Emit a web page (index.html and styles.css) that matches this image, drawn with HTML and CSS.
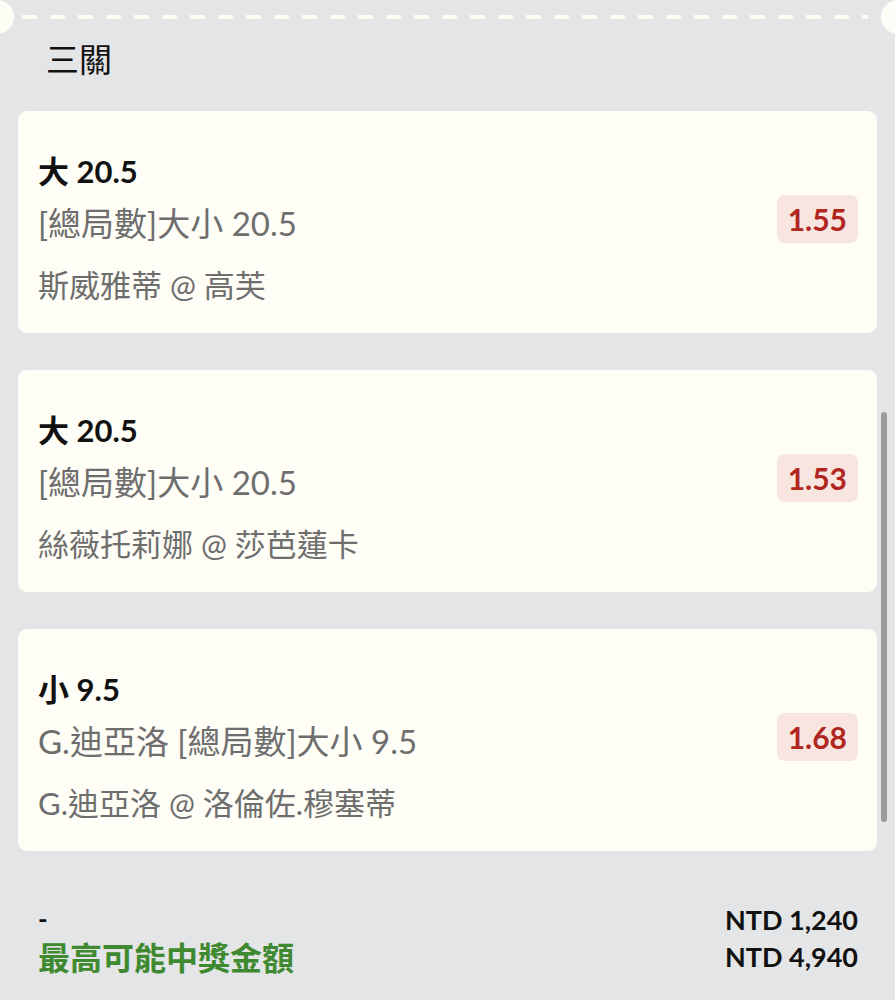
FILE: index.html
```html
<!DOCTYPE html>
<html lang="zh-Hant">
<head>
<meta charset="utf-8">
<title>三關</title>
<link rel="stylesheet" href="styles.css">
</head>
<body>
<div class="page">
  <div class="perforation">
    <span class="notch notch-left"></span>
    <div class="dashes"></div>
    <span class="notch notch-right"></span>
  </div>
  <h2 class="section-title">三關</h2>
  <div class="cards">
    <div class="card">
      <div class="info">
        <div class="pick">大 20.5</div>
        <div class="market">[總局數]大小 20.5</div>
        <div class="match">斯威雅蒂 @ 高芙</div>
      </div>
      <div class="odds">1.55</div>
    </div>
    <div class="card">
      <div class="info">
        <div class="pick">大 20.5</div>
        <div class="market">[總局數]大小 20.5</div>
        <div class="match">絲薇托莉娜 @ 莎芭蓮卡</div>
      </div>
      <div class="odds">1.53</div>
    </div>
    <div class="card">
      <div class="info">
        <div class="pick">小 9.5</div>
        <div class="market">G.迪亞洛 [總局數]大小 9.5</div>
        <div class="match">G.迪亞洛 @ 洛倫佐.穆塞蒂</div>
      </div>
      <div class="odds">1.68</div>
    </div>
  </div>
  <div class="summary">
    <div class="summary-left">
      <div class="dash-label">-</div>
      <div class="win-label">最高可能中獎金額</div>
    </div>
    <div class="summary-right">
      <div class="amount">NTD 1,240</div>
      <div class="amount">NTD 4,940</div>
    </div>
  </div>
  <div class="scrollbar"></div>
</div>
</body>
</html>
```
FILE: styles.css
```css
html, body {
  margin: 0;
  padding: 0;
  background: #e4e5e7;
}
body {
  font-family: Lato, "Noto Sans CJK TC", sans-serif;
  color: #111;
}
.page {
  position: relative;
  width: 895px;
  height: 1000px;
  overflow: hidden;
  padding: 0 18px;
  box-sizing: border-box;
}
.perforation {
  position: relative;
  height: 34px;
  display: flex;
  align-items: center;
}
.notch {
  position: absolute;
  top: 0;
  width: 34px;
  height: 34px;
  border-radius: 50%;
  background: #fefdf5;
}
.notch-left { left: -38px; }
.notch-right { right: -38px; }
.dashes {
  flex: 1;
  height: 4px;
  margin: 0 9px 0 4px;
  background: repeating-linear-gradient(90deg, #fbfbf1 0 15px, transparent 15px 28px);
}
.section-title {
  margin: 2px 0 0 28px;
  font-family: "Noto Sans CJK TC", sans-serif;
  font-weight: 400;
  font-size: 33px;
  line-height: 44px;
  color: #111;
}
.cards {
  margin-top: 31px;
  display: flex;
  flex-direction: column;
  gap: 37px;
}
.card {
  height: 222px;
  box-sizing: border-box;
  background: #fefdf6;
  border-radius: 9px;
  padding: 0 19px 0 20px;
  display: flex;
  align-items: center;
  justify-content: space-between;
}
.info {
  display: flex;
  flex-direction: column;
  align-self: flex-start;
  padding-top: 34px;
}
.pick {
  font-weight: 700;
  font-size: 31px;
  line-height: 52px;
  color: #111;
}
.market, .match {
  line-height: 52px;
  color: #6e6e6e;
}
.market {
  font-size: 33px;
}
.match {
  font-size: 31px;
  margin-top: 10px;
}
.odds {
  margin-top: -6px;
  background: #f8e5df;
  color: #b1271f;
  font-weight: 700;
  font-size: 30px;
  line-height: 48px;
  padding: 0 11px;
  border-radius: 8px;
}
.summary {
  margin-top: 50px;
  display: flex;
  justify-content: space-between;
  align-items: flex-start;
}
.summary-left {
  padding-left: 20px;
}
.dash-label {
  font-weight: 700;
  font-size: 26px;
  line-height: 37px;
  color: #111;
}
.win-label {
  font-weight: 700;
  font-size: 32px;
  line-height: 40px;
  color: #3f8a30;
}
.summary-right {
  padding-right: 19px;
  text-align: right;
}
.amount {
  font-weight: 700;
  font-size: 27px;
  line-height: 37px;
  color: #111;
}
.scrollbar {
  position: absolute;
  left: 881px;
  top: 412px;
  width: 6px;
  height: 410px;
  border-radius: 3px;
  background: #9b9b9b;
}
```
